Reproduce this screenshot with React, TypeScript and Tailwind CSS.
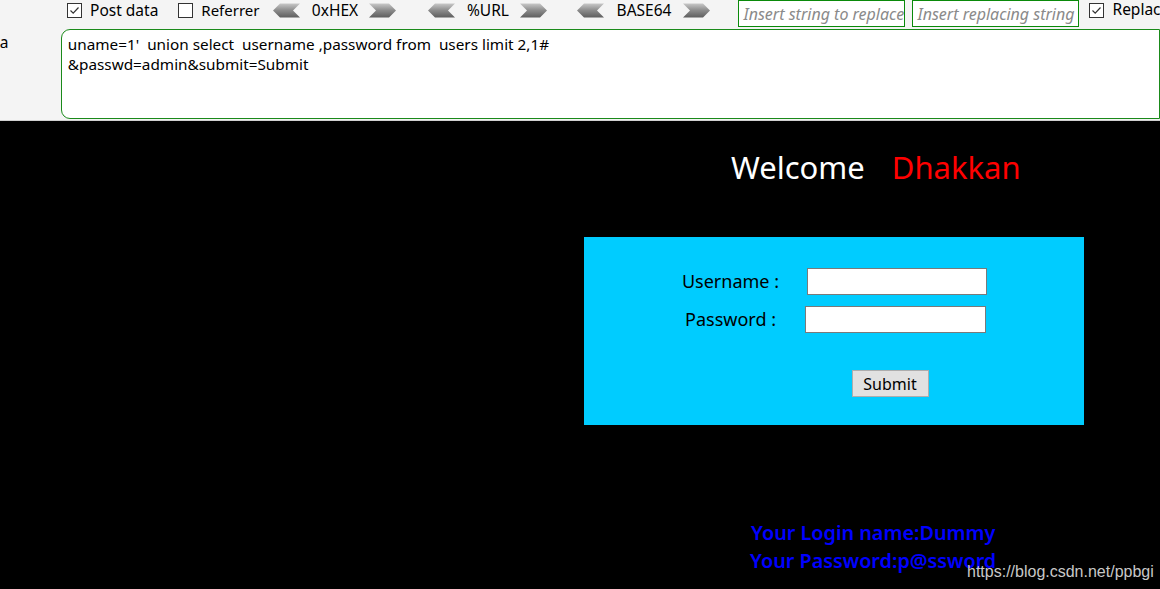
const LeftArrow = () => (
  <svg width="27" height="15" viewBox="0 0 27 15">
    <defs>
      <linearGradient id="ga" x1="0" y1="0" x2="0" y2="1">
        <stop offset="0" stopColor="#c8c8c8" />
        <stop offset="0.5" stopColor="#8a8a8a" />
        <stop offset="1" stopColor="#5e5e5e" />
      </linearGradient>
    </defs>
    <polygon points="0,7.5 7,0.5 27,0.5 20,7.5 27,14.5 7,14.5" fill="url(#ga)" />
  </svg>
);

const RightArrow = () => (
  <svg width="27" height="15" viewBox="0 0 27 15">
    <defs>
      <linearGradient id="gb" x1="0" y1="0" x2="0" y2="1">
        <stop offset="0" stopColor="#c8c8c8" />
        <stop offset="0.5" stopColor="#8a8a8a" />
        <stop offset="1" stopColor="#5e5e5e" />
      </linearGradient>
    </defs>
    <polygon points="0,0.5 20,0.5 27,7.5 20,14.5 0,14.5 7,7.5" fill="url(#gb)" />
  </svg>
);

const Check = ({ on }: { on: boolean }) => (
  <span className="w-[15px] h-[15px] border border-[#333] bg-white flex items-center justify-center">
    {on && (
      <svg width="11" height="11" viewBox="0 0 11 11">
        <path d="M1.5 5.5 L4.2 8.2 L9.5 2.5" stroke="#333" strokeWidth="1.2" fill="none" />
      </svg>
    )}
  </span>
);

const Encoder = ({ label, w }: { label: string; w: string }) => (
  <div className="flex items-center">
    <LeftArrow />
    <span className={`${w} text-center`}>{label}</span>
    <RightArrow />
  </div>
);

export default function App() {
  return (
    <div className="w-[1160px] h-[589px] overflow-hidden bg-black font-['Noto_Sans','Open_Sans',sans-serif]">
      {/* hackbar */}
      <div className="h-[121px] bg-[#f4f4f4] border-b border-[#d0d0d0] text-[15.5px] text-black relative overflow-hidden">
        <div className="h-[28px] flex items-start whitespace-nowrap">
          <div className="flex items-center h-[20px] pl-[67px] leading-[20px]">
            <Check on={true} />
            <span className="ml-[8px]">Post data</span>
            <span className="ml-[20px]"><Check on={false} /></span>
            <span className="ml-[8px] text-[15px] leading-[20px] -mt-px">Referrer</span>
            <div className="ml-[14px] flex items-center">
              <Encoder label="0xHEX" w="w-[69px]" />
              <div className="ml-[32px]">
                <Encoder label="%URL" w="w-[65px]" />
              </div>
              <div className="ml-[30px]">
                <Encoder label="BASE64" w="w-[79px]" />
              </div>
            </div>
          </div>
          <div className="ml-[28px] flex items-center gap-[7px]">
            <div className="w-[167px] h-[27px] border border-[#0a8a0a] bg-white px-[4px] flex items-center italic text-[16px] text-[#8a8a8a] overflow-hidden">
              Insert string to replace
            </div>
            <div className="w-[167px] h-[27px] border border-[#0a8a0a] bg-white px-[4px] flex items-center italic text-[16px] text-[#8a8a8a] overflow-hidden">
              Insert replacing string
            </div>
          </div>
          <div className="flex items-center h-[20px]">
            <span className="ml-[10px]"><Check on={true} /></span>
            <span className="ml-[8px]">Replace All</span>
          </div>
        </div>
        <div className="flex mt-px">
          <div className="w-[62px] overflow-hidden pt-[2px] whitespace-nowrap">
            <span className="inline-block -ml-[60px]">Post data</span>
          </div>
          <div className="w-[1120px] h-[90px] border border-[#1a8a1a] rounded-l-[9px] bg-white px-[6px] pt-[4px] leading-[20px] text-[15.3px]">
            <div className="whitespace-pre">uname=1'  union select  username ,password from  users limit 2,1#</div>
            <div>&amp;passwd=admin&amp;submit=Submit</div>
          </div>
        </div>
      </div>

      {/* page */}
      <div className="relative h-[468px]">
        <div className="pt-[24px] pl-[731px] flex gap-[27px] text-[31px] leading-[44px]">
          <span className="text-white">Welcome</span>
          <span className="text-[#ff0000]">Dhakkan</span>
        </div>
        <div className="ml-[584px] mt-[48px] w-[500px] h-[188px] bg-[#00ccff] flex flex-col items-center pt-[31px] text-[18px] text-black">
          <div className="flex items-center gap-[28px] h-[27px] mr-[4px]">
            <span className="w-[102px] text-right">Username :</span>
            <div className="w-[180px] h-[27px] bg-white border border-[#7a7a7a]" />
          </div>
          <div className="flex items-center gap-[29px] h-[27px] mt-[11px] mr-[2px]">
            <span className="w-[96px] text-right">Password :</span>
            <div className="w-[181px] h-[27px] bg-white border border-[#7a7a7a]" />
          </div>
          <div className="mt-[37px] ml-[112px] w-[77px] h-[27px] bg-[#e1e1e1] border border-[#adadad] flex items-center justify-center text-[16px]">
            Submit
          </div>
        </div>
        <div className="ml-[751px] mt-[94px] text-[#0000ff] text-[19.8px] font-semibold leading-[28px]">
          <div>Your Login name:Dummy</div>
          <div className="-ml-px">Your Password:p@ssword</div>
        </div>
        <div className="absolute left-[967px] top-[439px] text-[16px] text-[#c8c8c8] font-['Liberation_Sans',sans-serif]">
          https://blog.csdn.net/ppbgi
        </div>
      </div>
    </div>
  );
}
